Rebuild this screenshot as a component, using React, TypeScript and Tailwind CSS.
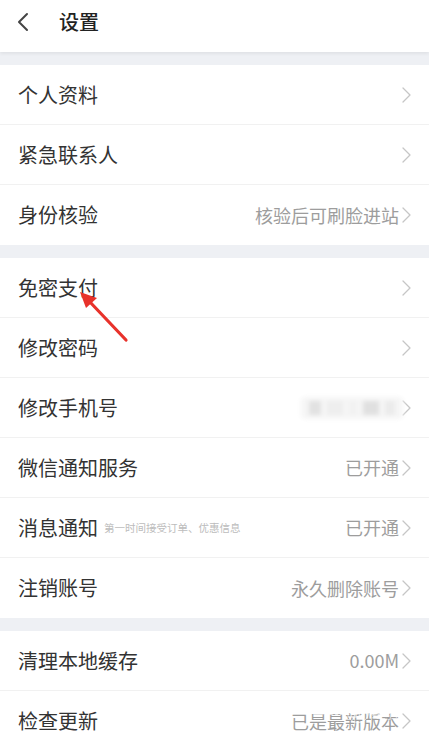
import React from 'react';

type Row = {
  label: string;
  value?: string;
  hint?: string;
  blurred?: boolean;
};

const groups: Row[][] = [
  [{ label: '个人资料' }, { label: '紧急联系人' }, { label: '身份核验', value: '核验后可刷脸进站' }],
  [
    { label: '免密支付' },
    { label: '修改密码' },
    { label: '修改手机号', blurred: true },
    { label: '微信通知服务', value: '已开通' },
    { label: '消息通知', hint: '第一时间接受订单、优惠信息', value: '已开通' },
    { label: '注销账号', value: '永久删除账号' },
  ],
  [{ label: '清理本地缓存', value: '0.00M' }, { label: '检查更新', value: '已是最新版本' }],
];

function Chevron() {
  return (
    <svg width="9" height="16" viewBox="0 0 9 16" fill="none" className="ml-[3px] shrink-0">
      <path d="M1 1l7 7-7 7" stroke="#c6c6c6" strokeWidth="1.3" strokeLinecap="round" strokeLinejoin="round" />
    </svg>
  );
}

function SettingRow({ row, last }: { row: Row; last: boolean }) {
  return (
    <div className={`flex h-[60px] items-center pl-[18px] pr-[18px] ${last ? '' : 'border-b border-[#f1f1f1]'}`}>
      <span className="text-[20px] text-[#333]">{row.label}</span>
      {row.hint && <span className="ml-[6px] text-[10.5px] text-[#bcbcbc]">{row.hint}</span>}
      <div className="ml-auto flex items-center">
        {row.value && <span className="text-[18px] text-[#9d9d9d]">{row.value}</span>}
        {row.blurred && (
          <div className="mr-[-4px] flex h-[22px] w-[102px] items-center gap-[6px] rounded-sm bg-[#f6f6f6] px-2 blur-[2px]">
            <div className="h-[14px] w-[14px] bg-[#e2e2e2]" />
            <div className="h-[14px] w-[18px] bg-[#eeeeee]" />
            <div className="h-[14px] w-[10px] bg-[#f2f2f2]" />
            <div className="h-[14px] w-[18px] bg-[#e0e0e0]" />
            <div className="h-[14px] w-[12px] bg-[#ebebeb]" />
          </div>
        )}
        <Chevron />
      </div>
    </div>
  );
}

export default function App() {
  return (
    <div
      className="relative h-[740px] w-[429px] overflow-hidden bg-[#eef0f4]"
      style={{ fontFamily: '"Noto Sans CJK SC", "Noto Sans", sans-serif' }}
    >
      {/* Header */}
      <div className="flex h-[52px] items-center bg-white pb-[8px] pl-[17px] shadow-[0_2px_3px_rgba(0,0,0,0.06)]">
        <svg width="12" height="20" viewBox="0 0 12 20" fill="none">
          <path d="M10 2L2 10l8 8" stroke="#444" strokeWidth="2" strokeLinecap="round" strokeLinejoin="round" />
        </svg>
        <span className="ml-[30px] text-[20px] font-medium text-[#222]">设置</span>
      </div>

      <div className="mt-[13px] flex flex-col gap-[13px]">
        {groups.map((g, gi) => (
          <div key={gi} className="bg-white">
            {g.map((r, i) => (
              <SettingRow key={r.label} row={r} last={i === g.length - 1} />
            ))}
          </div>
        ))}
      </div>

      {/* Annotation arrow */}
      <svg className="absolute left-[72px] top-[285px]" width="64" height="62" viewBox="0 0 64 62">
        <path d="M54 55L17 16" stroke="#e8322b" strokeWidth="3.2" strokeLinecap="round" />
        <path d="M8 7L25 13L14 23Z" fill="#e8322b" />
      </svg>

      {/* Watermark */}
      <div className="pointer-events-none absolute left-[312px] top-[693px] flex items-end text-white/70">
        <span className="text-[20px] font-bold tracking-wide" style={{ fontFamily: '"Liberation Sans", sans-serif' }}>
          Bai
        </span>
        <span className="ml-[2px] rounded-full border border-white/70 px-[2px] text-[13px]">du</span>
        <span className="ml-[3px] text-[14px]">经验</span>
      </div>
    </div>
  );
}
